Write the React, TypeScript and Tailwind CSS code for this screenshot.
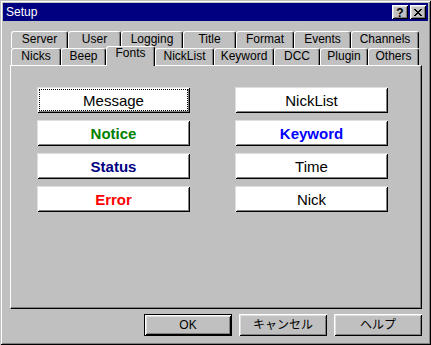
import React from "react";

const raised =
  "shadow-[inset_1px_1px_0_#dfdfdf,inset_-1px_-1px_0_#000,inset_2px_2px_0_#fff,inset_-2px_-2px_0_#808080]";

function Tab({ label, w, selected }: { label: string; w: number; selected?: boolean }) {
  if (selected) {
    return (
      <div
        style={{ width: w }}
        className="relative z-20 -mt-[2px] h-[20px] bg-[#c0c0c0] border-l border-t border-r border-white border-r-black rounded-t-[3px] shadow-[inset_-1px_0_0_#808080] flex justify-center pt-0 text-[12px] leading-[12px] text-black"
      >
        {label}
      </div>
    );
  }
  return (
    <div
      style={{ width: w }}
      className="h-[17px] bg-[#c0c0c0] border-l border-t border-r border-white border-r-black rounded-t-[3px] shadow-[inset_-1px_0_0_#808080] flex justify-center pt-[1px] text-[12px] leading-[12px] text-black"
    >
      {label}
    </div>
  );
}

function FontBtn({ label, cls, focus }: { label: string; cls: string; focus?: boolean }) {
  return (
    <div className={`w-[153px] h-[26px] bg-white ${raised} flex items-center justify-center p-[2px]`}>
      <div
        className={`w-full h-full flex items-center justify-center text-[15px] leading-none ${cls} ${
          focus ? "border border-dotted border-black" : ""
        }`}
      >
        {label}
      </div>
    </div>
  );
}

function DlgBtn({ label, def }: { label: string; def?: boolean }) {
  if (def) {
    return (
      <div className="w-[88px] h-[22px] border border-black bg-[#c0c0c0]">
        <div className="w-full h-full shadow-[inset_1px_1px_0_#fff,inset_-1px_-1px_0_#000,inset_2px_2px_0_#dfdfdf,inset_-2px_-2px_0_#808080] flex items-center justify-center text-[12px] leading-none text-black">
          {label}
        </div>
      </div>
    );
  }
  return (
    <div className="w-[88px] h-[22px] bg-[#c0c0c0] shadow-[inset_1px_1px_0_#fff,inset_-1px_-1px_0_#000,inset_2px_2px_0_#dfdfdf,inset_-2px_-2px_0_#808080] flex items-center justify-center text-[12px] leading-none text-black">
      {label}
    </div>
  );
}

const capBtn =
  "w-[16px] h-[14px] bg-[#c0c0c0] shadow-[inset_1px_1px_0_#fff,inset_-1px_-1px_0_#000,inset_2px_2px_0_#dfdfdf,inset_-2px_-2px_0_#808080] flex items-center justify-center";

export default function App() {
  const row1: [string, number][] = [
    ["Server", 57],
    ["User", 53],
    ["Logging", 62],
    ["Title", 53],
    ["Format", 58],
    ["Events", 57],
    ["Channels", 68],
  ];
  const row2: [string, number][] = [
    ["Nicks", 50],
    ["Beep", 45],
    ["Fonts", 49],
    ["NickList", 59],
    ["Keyword", 60],
    ["DCC", 46],
    ["Plugin", 48],
    ["Others", 51],
  ];
  return (
    <div className="w-[431px] h-[345px] bg-[#c0c0c0] p-[3px] flex flex-col shadow-[inset_1px_1px_0_#c0c0c0,inset_-1px_-1px_0_#000,inset_2px_2px_0_#fff,inset_-2px_-2px_0_#808080] font-['Liberation_Sans','Noto_Sans_CJK_JP',sans-serif] select-none">
      {/* Title bar */}
      <div className="h-[18px] bg-[#000080] flex items-center justify-between pl-[2px] pr-[2px]">
        <span className="text-white text-[12px] leading-none pl-[1px]">Setup</span>
        <div className="flex gap-[2px]">
          <div className={capBtn}>
            <span className="text-[12px] font-bold leading-none text-black mt-[1px]">?</span>
          </div>
          <div className={capBtn}>
            <svg width="8" height="7" viewBox="0 0 8 7" shapeRendering="crispEdges">
              <path d="M0 0h2v1h1v1h2V1h1V0h2v1H7v1H6v1H5v1h1v1h1v1h1v1H6V6H5V5H3v1H2v1H0V6h1V5h1V4h1V3H2V2H1V1H0z" fill="#000" />
            </svg>
          </div>
        </div>
      </div>

      {/* Tabs + panel */}
      <div className="mt-[10px] ml-[7px] flex flex-col">
        <div className="flex ml-[1px] h-[17px]">
          {row1.map(([l, w]) => (
            <Tab key={l} label={l} w={w} />
          ))}
        </div>
        <div className="relative z-10 flex items-start ml-[1px] h-[17px]">
          {row2.map(([l, w]) => (
            <Tab key={l} label={l} w={w} selected={l === "Fonts"} />
          ))}
        </div>
        <div className="w-[412px] h-[244px] bg-[#c0c0c0] border border-white border-r-black border-b-black shadow-[inset_-1px_-1px_0_#808080] pl-[26px] pt-[21px]">
          <div className="grid grid-cols-[153px_153px] gap-x-[45px] gap-y-[7px]">
            <FontBtn label="Message" cls="text-black" focus />
            <FontBtn label="NickList" cls="text-black" />
            <FontBtn label="Notice" cls="text-[#008000] font-bold" />
            <FontBtn label="Keyword" cls="text-[#0000ff] font-bold" />
            <FontBtn label="Status" cls="text-[#000080] font-bold" />
            <FontBtn label="Time" cls="text-black" />
            <FontBtn label="Error" cls="text-[#ff0000] font-bold" />
            <FontBtn label="Nick" cls="text-black" />
          </div>
        </div>
      </div>

      {/* Dialog buttons */}
      <div className="mt-[5px] flex justify-end gap-[7px] pr-[6px]">
        <DlgBtn label="OK" def />
        <DlgBtn label="キャンセル" />
        <DlgBtn label="ヘルプ" />
      </div>
    </div>
  );
}
